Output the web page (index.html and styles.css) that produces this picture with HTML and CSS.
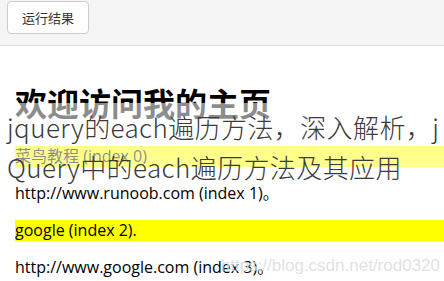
FILE: index.html
```html
<!DOCTYPE html>
<html lang="zh">
<head>
<meta charset="utf-8">
<title>运行结果</title>
<link rel="stylesheet" href="styles.css">
</head>
<body>
<div class="topbar">
  <button class="run-btn">运行结果</button>
</div>
<div class="result">
  <h1 class="title">欢迎访问我的主页</h1>
  <p class="item hl">菜鸟教程 (index 0)</p>
  <p class="item">http://www.runoob.com (index 1)。</p>
  <p class="item hl">google (index 2).</p>
  <p class="item">http://www.google.com (index 3)。</p>
</div>
<div class="overlay">
  <div class="ov-line ov-full">jquery的each遍历方法，深入解析，j</div>
  <div class="ov-line">Query中的each遍历方法及其应用</div>
</div>
<div class="watermark">https://blog.csdn.net/rod0320</div>
</body>
</html>
```
FILE: styles.css
```css
html, body {
  margin: 0;
  padding: 0;
  background: #fff;
  width: 444px;
  height: 281px;
  overflow: hidden;
  position: relative;
}
body {
  font-family: "Open Sans", "Noto Sans CJK SC", sans-serif;
}
.topbar {
  box-sizing: border-box;
  height: 46px;
  padding: 1px 0 0 7px;
  background: #f5f5f5;
  border-bottom: 1px solid #ddd;
}
.run-btn {
  display: block;
  width: 82px;
  height: 33px;
  padding: 0;
  background: #fff;
  border: 1px solid #ccc;
  border-radius: 4px;
  font-family: "Noto Sans CJK SC", sans-serif;
  font-size: 13px;
  color: #333;
}
.result {
  padding: 12px 0 0 15px;
}
.title {
  margin: 21px 0;
  font-family: "Noto Sans CJK SC", sans-serif;
  font-size: 32px;
  font-weight: bold;
  line-height: 46px;
  color: #000;
}
.item {
  margin: 16px 0;
  font-size: 16px;
  line-height: 21px;
  color: #000;
  white-space: nowrap;
}
.item.hl {
  background: #ffff00;
}
.overlay {
  position: absolute;
  left: 0;
  top: 103px;
  width: 444px;
  height: 69px;
  box-sizing: border-box;
  padding: 4px 0 0 7px;
  background: rgba(255, 255, 255, 0.55);
  font-family: "Noto Sans CJK SC", sans-serif;
  font-weight: 300;
  font-size: 26px;
  line-height: 40px;
  letter-spacing: 0.4px;
  color: #3a3a3a;
  white-space: nowrap;
}
.ov-full {
  width: 426px;
  text-align: justify;
  text-align-last: justify;
}
.watermark {
  position: absolute;
  right: 4px;
  top: 256px;
  font-family: "Liberation Sans", sans-serif;
  font-size: 17px;
  color: rgba(200, 200, 200, 0.55);
  text-shadow: 0 0 1px rgba(255, 255, 255, 0.8);
}
```
